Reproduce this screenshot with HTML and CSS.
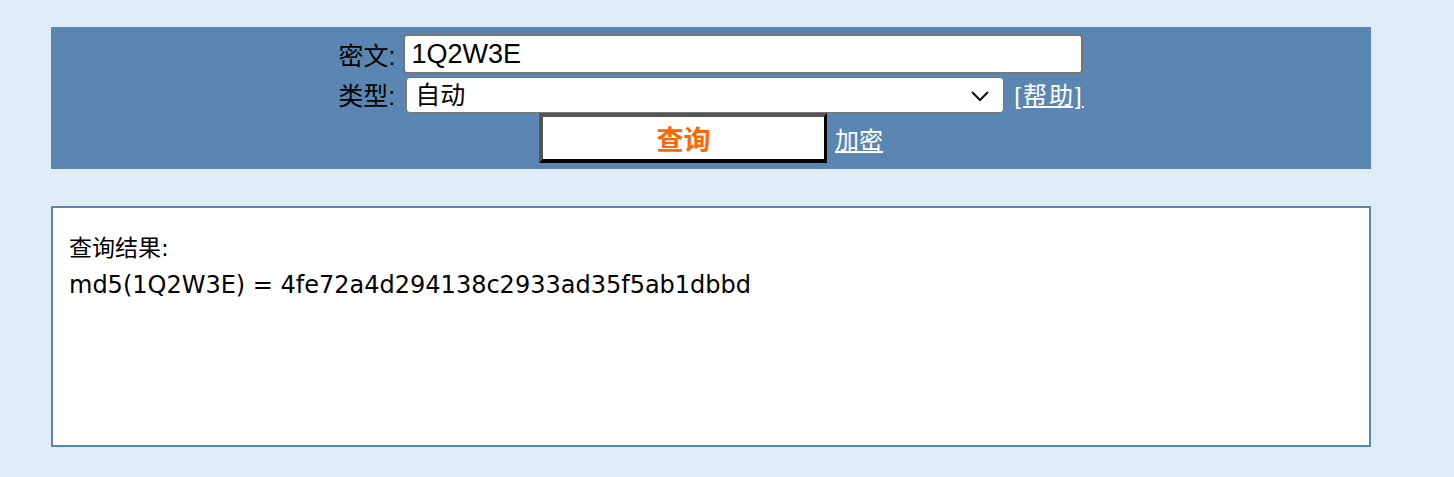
FILE: index.html
```html
<!DOCTYPE html>
<html lang="zh-CN">
<head>
<meta charset="utf-8">
<title>MD5</title>
<link rel="stylesheet" href="styles.css">
</head>
<body>
<div class="page">
  <form class="panel">
    <div class="row">
      <label class="lbl">密文:</label>
      <input class="txt" type="text" value="1Q2W3E">
    </div>
    <div class="row">
      <label class="lbl lbl2">类型:</label>
      <span class="sel-wrap">
        <select class="sel"><option>自动</option></select>
        <svg class="chev" width="20" height="12" viewBox="0 0 20 12" aria-hidden="true"><path d="M2 2 L10 10 L18 2" fill="none" stroke="#111" stroke-width="2"/></svg>
      </span>
      <a class="link help" href="#">[帮助]</a>
    </div>
    <div class="row">
      <button class="btn" type="button">查询</button>
      <a class="link enc" href="#">加密</a>
    </div>
  </form>
  <div class="result">
    <div class="res-title">查询结果:</div>
    <div class="res-line">md5(1Q2W3E) = 4fe72a4d294138c2933ad35f5ab1dbbd</div>
  </div>
</div>
</body>
</html>
```
FILE: styles.css
```css
html, body {
  margin: 0;
  padding: 0;
  background: #e1edf6;
}
body {
  font-family: "Noto Sans CJK SC", "Liberation Sans", sans-serif;
}
.page {
  padding: 27px 0 0 51px;
  width: 1320px;
}
.panel {
  margin: 0;
  background: #5b86b1;
  height: 142px;
  box-sizing: border-box;
  padding-top: 7px;
  display: flex;
  flex-direction: column;
  align-items: center;
}
.row {
  display: flex;
  align-items: center;
  justify-content: center;
}
.lbl {
  font-size: 25px;
  color: #000;
  margin-right: 8px;
  font-family: "Liberation Sans", "Noto Sans CJK SC", sans-serif;
}
.lbl2 { margin-right: 11px; }
.txt {
  width: 680px;
  height: 40px;
  box-sizing: border-box;
  border: 2px solid #767676;
  border-radius: 4px;
  padding: 0 6px;
  font-size: 27px;
  font-family: "Liberation Sans", "Noto Sans CJK SC", sans-serif;
  color: #000;
  background: #fff;
}
.sel-wrap {
  position: relative;
  display: inline-block;
  margin-top: 3px;
  height: 36px;
}
.sel {
  -webkit-appearance: none;
  appearance: none;
  width: 598px;
  height: 36px;
  box-sizing: border-box;
  border: 1px solid #767676;
  border-radius: 4px;
  font-size: 25px;
  font-family: "Liberation Sans", "Noto Sans CJK SC", sans-serif;
  padding: 0 8px;
  background: #fff;
  color: #000;
}
.chev {
  position: absolute;
  right: 14px;
  top: 13px;
  pointer-events: none;
}
.link {
  color: #fff;
  text-decoration: underline;
  font-size: 24px;
  font-family: "Liberation Sans", "Noto Sans CJK SC", sans-serif;
}
.help { margin-left: 10px; letter-spacing: 2px; }
.enc { margin-left: 8px; }
.btn {
  width: 288px;
  height: 50px;
  box-sizing: border-box;
  background: #fff;
  border-style: solid;
  border-width: 4px 3px 4px 4px;
  border-color: #555 #000 #000 #555;
  color: #ff6600;
  font-weight: bold;
  font-size: 27px;
  font-family: "Liberation Sans", "Noto Sans CJK SC", sans-serif;
  padding: 0;
}
.result {
  margin-top: 37px;
  height: 241px;
  box-sizing: border-box;
  background: #fff;
  border: 2px solid #5b86b1;
  padding: 22px 16px;
  font-size: 24px;
  line-height: 37px;
  color: #000;
  font-family: "DejaVu Sans", "Noto Sans CJK SC", sans-serif;
}
.res-title {
  font-size: 23px;
}
```
